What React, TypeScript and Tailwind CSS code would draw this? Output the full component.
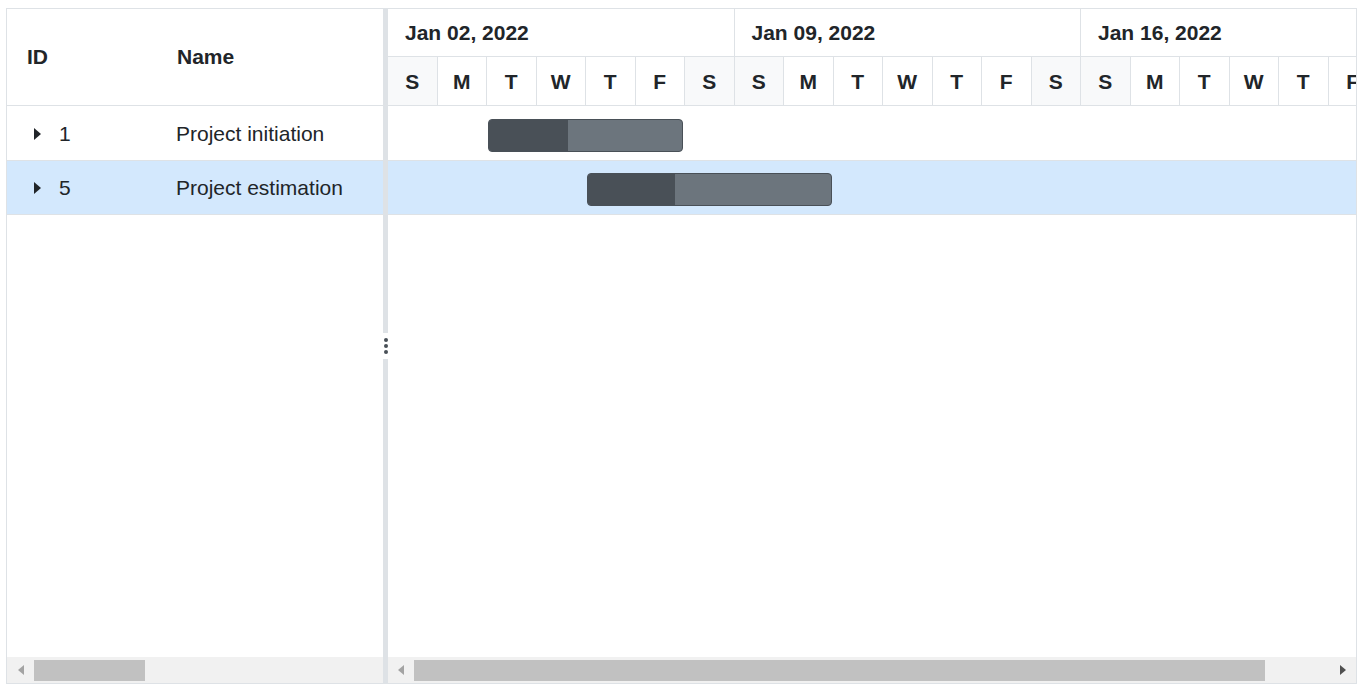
import React from "react";

const WEEKS = ["Jan 02, 2022", "Jan 09, 2022", "Jan 16, 2022"];
const DAYS = ["S", "M", "T", "W", "T", "F", "S"];

const ROWS = [
  { id: 1, name: "Project initiation", left: 100, width: 195, done: 79, selected: false, h: "h-[55px]", top: "top-[13px]" },
  { id: 5, name: "Project estimation", left: 199, width: 245, done: 87, selected: true, h: "h-[54px]", top: "top-[12px]" },
];

function Caret() {
  return (
    <svg width="8" height="14" viewBox="0 0 8 14" className="shrink-0">
      <path d="M1 1 L8 7 L1 13 Z" fill="#212529" />
    </svg>
  );
}

function ScrollArrow({ dir, color }: { dir: "left" | "right"; color: string }) {
  return (
    <svg width="6" height="10" viewBox="0 0 6 10">
      {dir === "left" ? <path d="M6 0 L0 5 L6 10 Z" fill={color} /> : <path d="M0 0 L6 5 L0 10 Z" fill={color} />}
    </svg>
  );
}

export default function App() {
  return (
    <div className="pl-[6px] pt-[8px] bg-white" style={{ fontFamily: '"Liberation Sans", Arial, sans-serif' }}>
      <div className="flex h-[676px] w-[1351px] border border-[#dee2e6] text-[#212529]">
        {/* grid side */}
        <div className="flex w-[376px] shrink-0 flex-col">
          <div className="flex h-[97px] items-center border-b border-[#dee2e6] text-[21px] font-bold">
            <div className="w-[170px] pl-[20px]">ID</div>
            <div>Name</div>
          </div>
          {ROWS.map((r) => (
            <div
              key={r.id}
              className={`flex ${r.h} items-center border-b border-[#dee2e6] pt-[1px] text-[21px] ${r.selected ? "bg-[#d3e8fd]" : ""}`}
            >
              <div className="flex w-[169px] items-center gap-[18px] pl-[26px]">
                <Caret />
                <span>{r.id}</span>
              </div>
              <div>{r.name}</div>
            </div>
          ))}
          <div className="flex-1" />
          <div className="flex h-[26px] items-center bg-[#f1f1f1] pl-[11px]">
            <ScrollArrow dir="left" color="#a3a3a3" />
            <div className="ml-[10px] h-[21px] w-[111px] bg-[#c1c1c1]" />
          </div>
        </div>

        {/* splitter */}
        <div className="relative w-[5px] shrink-0 bg-[#dee2e6]">
          <div className="absolute left-0 top-[324px] flex h-[26px] w-[5px] flex-col items-center justify-center gap-[2px] bg-white">
            <span className="block h-[4px] w-[4px] rounded-full bg-[#495057]" />
            <span className="block h-[4px] w-[4px] rounded-full bg-[#495057]" />
            <span className="block h-[4px] w-[4px] rounded-full bg-[#495057]" />
          </div>
        </div>

        {/* chart side */}
        <div className="flex min-w-0 flex-1 flex-col overflow-hidden">
          <div className="flex h-[48px] border-b border-[#dee2e6]">
            {WEEKS.map((w) => (
              <div
                key={w}
                className="flex w-[346.5px] shrink-0 items-center border-r border-[#dee2e6] pl-[17px] pt-[1px] text-[21px] font-bold"
              >
                {w}
              </div>
            ))}
          </div>
          <div className="flex h-[49px] border-b border-[#dee2e6]">
            {WEEKS.flatMap((w) =>
              DAYS.map((d, i) => (
                <div
                  key={w + i}
                  className={`flex w-[49.5px] shrink-0 items-center justify-center border-r border-[#dee2e6] pt-[1px] text-[21px] font-bold ${
                    i === 0 || i === 6 ? "bg-[#f8f9fa]" : "bg-white"
                  }`}
                >
                  {d}
                </div>
              ))
            )}
          </div>
          {ROWS.map((r) => (
            <div
              key={r.id}
              className={`relative ${r.h} border-b border-[#dee2e6] ${r.selected ? "bg-[#d3e8fd]" : ""}`}
            >
              <div
                className={`absolute ${r.top} flex h-[33px] overflow-hidden rounded-[4px] border border-[#495057] bg-[#6c757d]`}
                style={{ left: r.left, width: r.width }}
              >
                <div className="h-full bg-[#495057]" style={{ width: r.done }} />
              </div>
            </div>
          ))}
          <div className="flex-1" />
          <div className="flex h-[26px] items-center bg-[#f1f1f1] pl-[10px] pr-[10px]">
            <ScrollArrow dir="left" color="#a3a3a3" />
            <div className="ml-[10px] h-[21px] w-[851px] bg-[#c1c1c1]" />
            <div className="flex-1" />
            <ScrollArrow dir="right" color="#505050" />
          </div>
        </div>
      </div>
    </div>
  );
}
